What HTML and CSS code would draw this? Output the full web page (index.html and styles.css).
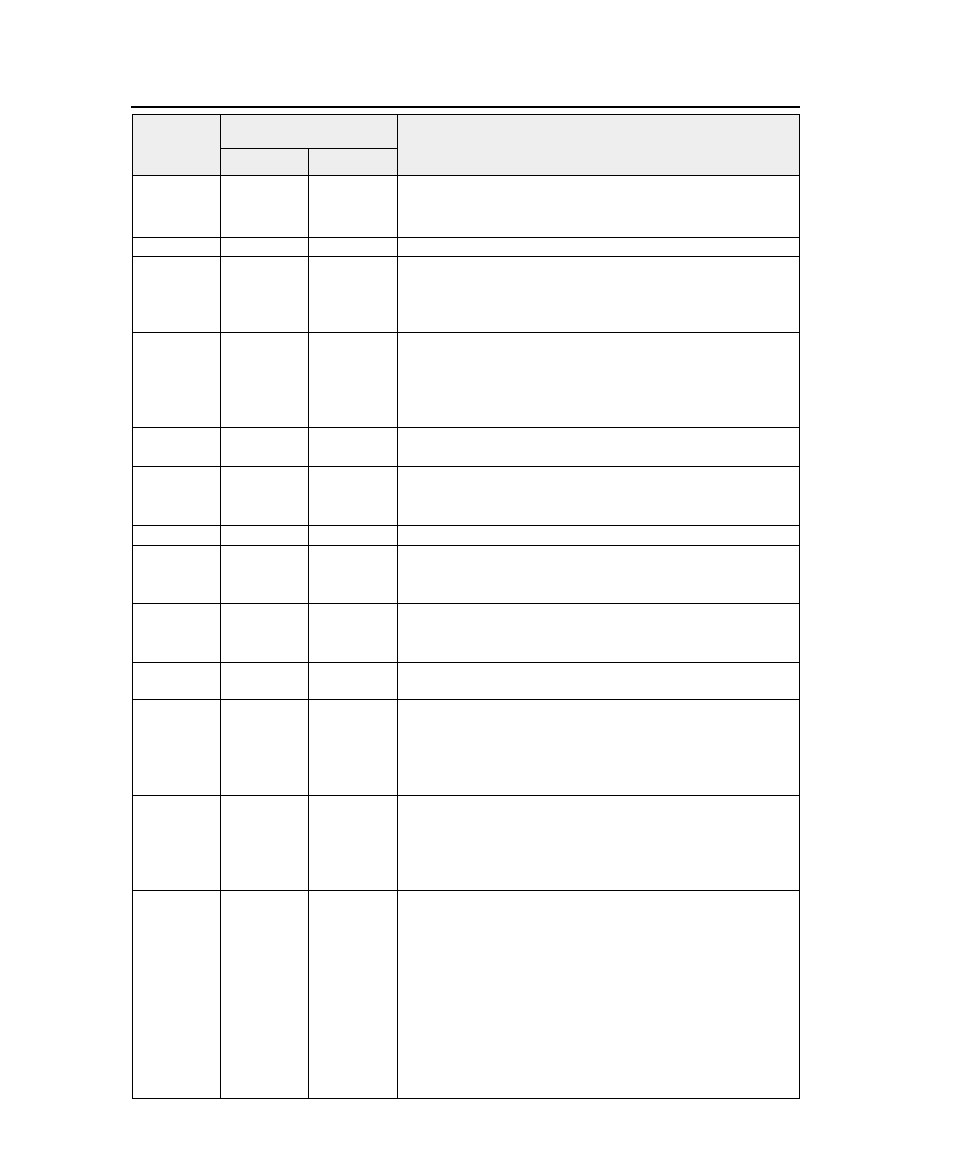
FILE: index.html
```html
<!DOCTYPE html>
<html lang="en">
<head>
<meta charset="utf-8">
<title>Table</title>
<link rel="stylesheet" href="styles.css">
</head>
<body>
<div class="page">
  <div class="rule"></div>
  <div class="grid">
    <div class="cell head span-rows"></div>
    <div class="cell head span-cols"></div>
    <div class="cell head span-rows"></div>
    <div class="cell head"></div>
    <div class="cell head"></div>

    <div class="cell"></div><div class="cell"></div><div class="cell"></div><div class="cell"></div>
    <div class="cell"></div><div class="cell"></div><div class="cell"></div><div class="cell"></div>
    <div class="cell"></div><div class="cell"></div><div class="cell"></div><div class="cell"></div>
    <div class="cell"></div><div class="cell"></div><div class="cell"></div><div class="cell"></div>
    <div class="cell"></div><div class="cell"></div><div class="cell"></div><div class="cell"></div>
    <div class="cell"></div><div class="cell"></div><div class="cell"></div><div class="cell"></div>
    <div class="cell"></div><div class="cell"></div><div class="cell"></div><div class="cell"></div>
    <div class="cell"></div><div class="cell"></div><div class="cell"></div><div class="cell"></div>
    <div class="cell"></div><div class="cell"></div><div class="cell"></div><div class="cell"></div>
    <div class="cell"></div><div class="cell"></div><div class="cell"></div><div class="cell short"></div>
    <div class="cell"></div><div class="cell"></div><div class="cell"></div><div class="cell"></div>
    <div class="cell"></div><div class="cell"></div><div class="cell"></div><div class="cell short"></div>
    <div class="cell"></div><div class="cell"></div><div class="cell"></div><div class="cell"></div>
  </div>
</div>
</body>
</html>
```

FILE: styles.css
```css
html, body {
  margin: 0;
  padding: 0;
  background: #ffffff;
  font-family: "Liberation Sans", Arial, sans-serif;
}

.page {
  padding-top: 106px;
  padding-left: 131px;
  width: 669px;
}

.rule {
  height: 2px;
  background: #000000;
  width: 669px;
}

.grid {
  box-sizing: border-box;
  margin-top: 6px;
  margin-left: 1px;
  width: 668px;
  display: grid;
  grid-template-columns: 88px 88px 89px 402px;
  grid-template-rows: 34px 27px 62px 19px 76px 95px 39px 59px 20px 58px 59px 37px 96px 95px 208px;
  border-left: 1px solid #000000;
  border-top: 1px solid #000000;
}

.cell {
  box-sizing: border-box;
  border-right: 1px solid #000000;
  border-bottom: 1px solid #000000;
}

.head {
  background: #eeeeee;
}

.span-rows {
  grid-row: span 2;
}

.span-cols {
  grid-column: span 2;
}
```
